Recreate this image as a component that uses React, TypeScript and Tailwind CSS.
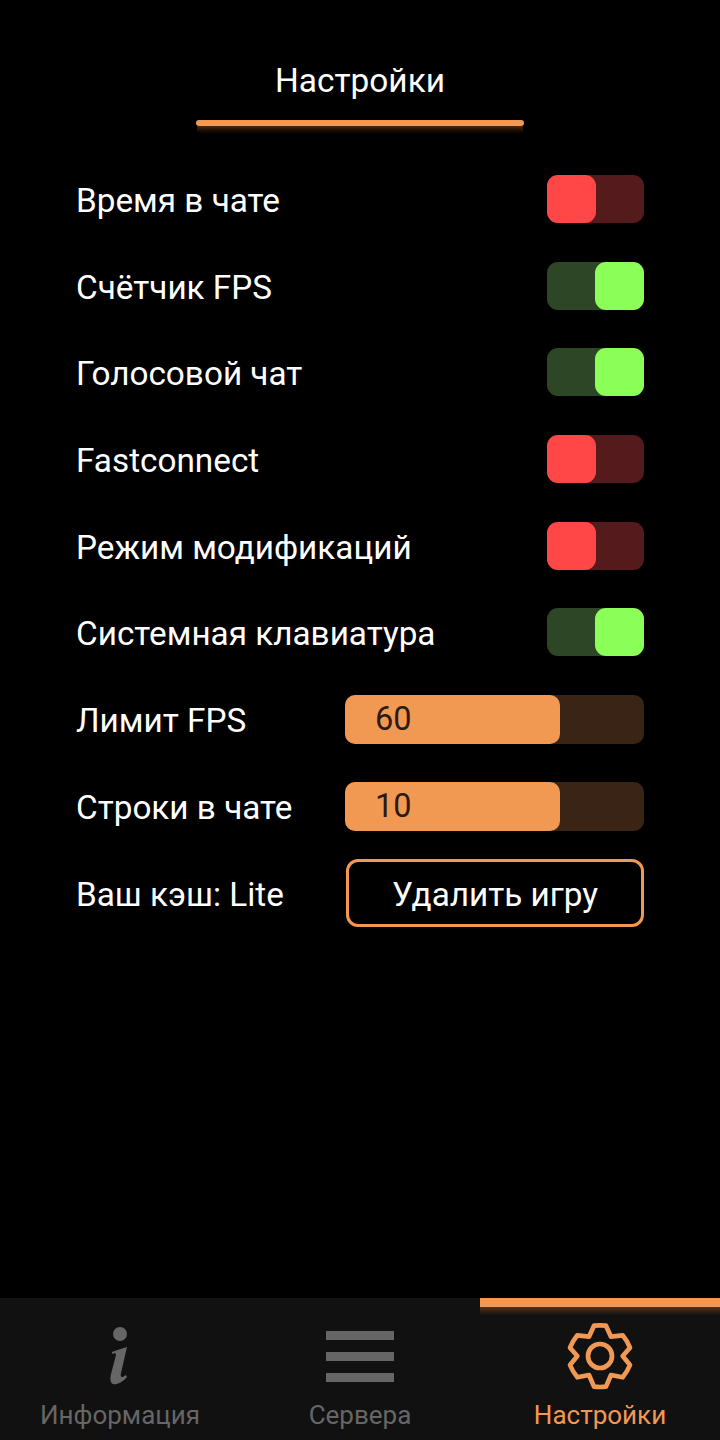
import React from 'react';

const font = { fontFamily: 'Roboto, sans-serif' };

const Toggle: React.FC<{ on: boolean }> = ({ on }) => (
  <div className={`w-[97px] h-[48px] rounded-[11px] flex ${on ? 'bg-[#2d4626] justify-end' : 'bg-[#551a1b] justify-start'}`}>
    <div className={`w-[49px] h-[48px] rounded-[11px] ${on ? 'bg-[#8bff57]' : 'bg-[#ff4747]'}`} />
  </div>
);

const Slider: React.FC<{ value: string }> = ({ value }) => (
  <div className="w-[299px] h-[49px] rounded-[10px] bg-[#3a2416] flex">
    <div className="w-[215px] h-full rounded-[10px] bg-[#f19853] flex items-center pl-[30px] text-[32.5px] text-[#2b1a0e]">
      {value}
    </div>
  </div>
);

const GearIcon = () => (
  <svg width="70" height="72" viewBox="255 105 210 216" fill="none" stroke="#f19853" strokeWidth="14" strokeLinejoin="round" className="mt-[5px]">
    <path d="M342 122 Q360 120 378 122 L393 155 L428 151 Q442 168 450 188 L428 213 L450 240 Q442 260 428 277 L393 270 L378 305 Q360 307 342 305 L327 270 L292 277 Q278 260 270 240 L292 213 L270 188 Q278 168 292 151 L327 155 Z" />
    <circle cx="360" cy="213" r="36" />
  </svg>
);

const rows = [
  { label: 'Время в чате', on: false },
  { label: 'Счётчик FPS', on: true },
  { label: 'Голосовой чат', on: true },
  { label: 'Fastconnect', on: false },
  { label: 'Режим модификаций', on: false },
  { label: 'Системная клавиатура', on: true },
];

export default function App() {
  return (
    <div className="w-[720px] h-[1440px] bg-black text-white flex flex-col overflow-hidden" style={font}>
      {/* Title */}
      <div className="flex flex-col items-center pt-[60px]">
        <h1 className="text-[33.4px] leading-[42px] font-normal">Настройки</h1>
        <div className="w-[328px] h-[6px] mt-[18px] rounded-full bg-[#f19853]" />
        <div className="w-[326px] h-[10px] bg-gradient-to-b from-[#4a2a13] to-black" />
      </div>

      {/* Settings list */}
      <div className="flex flex-col pt-[39px] pl-[76px] pr-[76px]">
        {rows.map(r => (
          <div key={r.label} className="h-[48px] mb-[38.7px] flex items-center justify-between text-[33.3px]">
            <span className="pt-[4px]">{r.label}</span>
            <Toggle on={r.on} />
          </div>
        ))}
        <div className="h-[49px] mb-[38px] flex items-center justify-between text-[33.3px]">
          <span className="pt-[3px]">Лимит FPS</span>
          <Slider value="60" />
        </div>
        <div className="h-[49px] mb-[28px] flex items-center justify-between text-[33.3px]">
          <span className="pt-[3px]">Строки в чате</span>
          <Slider value="10" />
        </div>
        <div className="flex items-center justify-between text-[33.3px]">
          <span className="pt-[3px]">Ваш кэш: Lite</span>
          <button className="w-[298px] h-[68px] rounded-[12px] border-[3px] border-[#f19853] pt-[3px] text-[33.3px] text-white">
            Удалить игру
          </button>
        </div>
      </div>

      {/* Bottom nav */}
      <div className="mt-auto h-[142px] bg-[#111111] flex">
        <div className="flex-1 flex flex-col items-center text-[#666666]">
          <svg width="24" height="60" viewBox="108 1326 24 60" className="mt-[28px]" fill="#666666">
            <circle cx="120" cy="1334" r="7" />
            <path d="M112 1352 C116 1350 122 1349 127 1347 L121 1373 C120 1378 122 1378 126 1375 L127 1377 C122 1383 116 1385 113 1384 C110 1383 110 1378 111 1374 L116 1355 C116 1353 114 1353 112 1354 Z" />
          </svg>
          <span className="text-[26px] leading-[32px] mt-[13px]">Информация</span>
        </div>
        <div className="flex-1 flex flex-col items-center text-[#666666]">
          <svg width="68" height="51" viewBox="0 0 68 51" className="mt-[33px]" fill="#666666">
            <rect x="0" y="0" width="68" height="9" />
            <rect x="0" y="21" width="68" height="9" />
            <rect x="0" y="42" width="68" height="9" />
          </svg>
          <span className="text-[26px] leading-[32px] mt-[17px]">Сервера</span>
        </div>
        <div className="flex-1 flex flex-col items-center text-[#f19853]">
          <div className="w-full h-[9px] bg-[#f19853]" />
          <div className="w-full h-[8px] bg-gradient-to-b from-[#5a3418] to-[#111111]" />
          <GearIcon />
          <span className="text-[26px] leading-[32px] mt-[7px]">Настройки</span>
        </div>
      </div>
    </div>
  );
}
